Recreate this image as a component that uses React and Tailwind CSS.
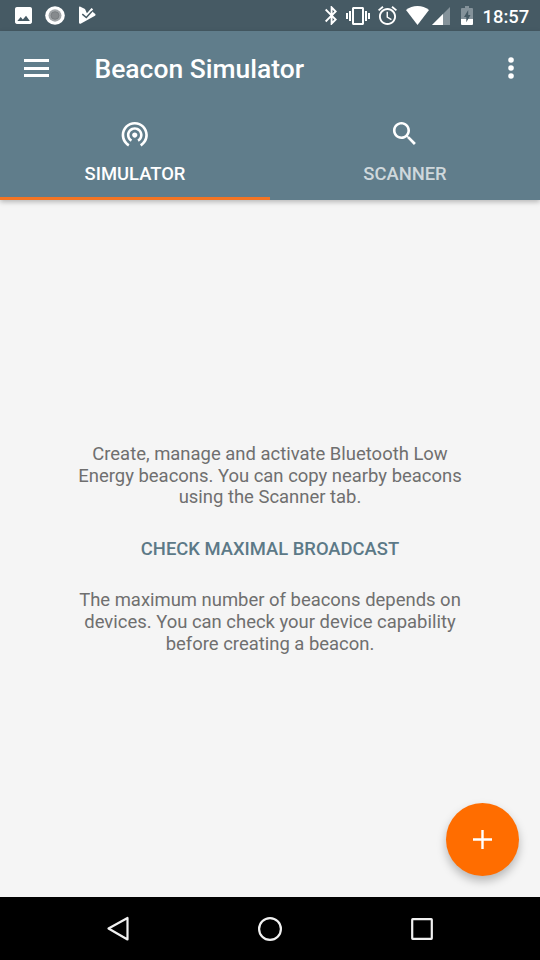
function Svg({ box, className, children }) {
  return (
    <svg viewBox={box} preserveAspectRatio="none" fill="currentColor" className={`block shrink-0 ${className}`}>
      {children}
    </svg>
  );
}

function StatusBar() {
  return (
    <div className="flex h-[31px] shrink-0 items-start bg-[#465a64] pl-[15px] text-white">
      <Svg box="3 3 18 18" className="mt-[7px] h-[17px] w-[17px]">
        <path d="M21 19V5c0-1.100-.9-2-2-2H5c-1.100 0-2 .9-2 2v14c0 1.100.9 2 2 2h14c1.100 0 2-.9 2-2zM9 13.500l2.300 2.700L14.700 12.200l4 5.500H5.500z" />
      </Svg>
      <Svg box="0 0 20 20" className="mt-[6px] ml-[13px] h-[19px] w-[20px]">
        <circle cx="10" cy="10" r="9.800" />
        <circle cx="10" cy="10" r="6.500" fill="#a1a5a8" />
        <circle cx="10" cy="10" r="4" fill="#868a8d" stroke="#74797c" strokeWidth="0.800" />
      </Svg>
      <Svg box="0 0 17 18" className="mt-[6px] ml-[14px] h-[18px] w-[17px]">
        <path d="M0 1.500Q0 0 1.500.7L6 3l2 4.500L12 4.500 16.300 8Q17 9 16 9.700L1.600 17.700Q0 18 0 16.500z" />
        <path d="M4.500 6.500l3 3L13.300 2.600" fill="none" stroke="#fff" strokeWidth="2.200" />
        <path d="M3.300 8.200l4 3.300L13 5.200" fill="none" stroke="#465a64" strokeWidth="1.500" />
      </Svg>
      <Svg box="5 2 12.710 20" className="mt-[6px] ml-[229px] h-[19px] w-[12px]">
        <path d="M17.710 7.710L12 2h-1v7.590L6.410 5 5 6.410 10.590 12 5 17.590 6.410 19 11 14.410V22h1l5.710-5.710-4.300-4.290 4.300-4.290zM13 5.830l1.880 1.880L13 9.590V5.830zm1.880 10.460L13 18.170v-3.760l1.880 1.880z" />
      </Svg>
      <Svg box="0 3 24 18" className="mt-[7px] ml-[9px] h-[18px] w-[24px]">
        <path d="M0 15h2V9H0v6zm3 2h2V7H3v10zm19-8v6h2V9h-2zm-3 8h2V7h-2v10zM16.500 3h-9C6.670 3 6 3.670 6 4.500v15c0 .83.67 1.500 1.500 1.500h9c.83 0 1.500-.67 1.500-1.500v-15c0-.83-.67-1.500-1.500-1.500zM16 19H8V5h8v14z" />
      </Svg>
      <Svg box="2 1.860 20 20.140" className="mt-[6px] ml-[8px] h-[19px] w-[19px]">
        <path d="M22 5.720l-4.600-3.860-1.290 1.530 4.600 3.860L22 5.720zM7.880 3.390L6.600 1.860 2 5.710l1.290 1.530 4.590-3.850zM12.500 8H11v6l4.750 2.850.75-1.230-4-2.370V8zM12 4c-4.970 0-9 4.030-9 9s4.020 9 9 9c4.970 0 9-4.030 9-9s-4.030-9-9-9zm0 16c-3.870 0-7-3.130-7-7s3.130-7 7-7 7 3.130 7 7-3.130 7-7 7z" />
      </Svg>
      <Svg box="0 0 23 19" className="mt-[6px] ml-[9px] h-[19px] w-[23px]">
        <path d="M11.500 19L0 4Q5 0 11.500 0T23 4z" />
      </Svg>
      <Svg box="0 0 18 18" className="mt-[7px] ml-[3px] h-[18px] w-[18px]">
        <path d="M18 0V18H0z" fill="#84929a" />
        <path d="M11 7V18H0z" />
      </Svg>
      <Svg box="0 0 12 19" className="mt-[6px] ml-[11px] h-[19px] w-[12px]">
        <path d="M4 0h4v2h3q1 0 1 1v10H0V3q0-1 1-1h3z" fill="#84929a" />
        <path d="M0 13h12v5q0 1-1 1H1q-1 0-1-1z" />
        <path d="M7.200 4L3 11h2.300v5.200L9.500 9H7.200z" fill="#465a64" />
      </Svg>
      <span className="mt-[5px] ml-[9.500px] text-[18.400px] leading-[24px] font-medium">18:57</span>
    </div>
  );
}

function Toolbar() {
  return (
    <div className="flex h-[74px] items-center pl-6">
      <div className="flex w-[25px] flex-col gap-[4.300px]">
        <div className="h-[3px] bg-white" />
        <div className="h-[3px] bg-white" />
        <div className="h-[3px] bg-white" />
      </div>
      <h1 className="ml-[45.500px] flex-1 pt-[2px] text-[26.450px] leading-8 font-medium">Beacon Simulator</h1>
      <Svg box="0 0 6 22" className="mr-[26px] h-[22px] w-[6px]">
        <circle cx="3" cy="3" r="2.800" />
        <circle cx="3" cy="11" r="2.800" />
        <circle cx="3" cy="19" r="2.800" />
      </Svg>
    </div>
  );
}

function Tabs() {
  return (
    <div className="flex h-[94.500px] text-center text-[18.400px] leading-6 font-medium">
      <div className="flex w-1/2 flex-col items-center border-b-3 border-[#f47422] pt-[13.250px]">
        <Svg box="0 0 24 24" className="size-[31.500px]">
          <path d="M12 11c-1.100 0-2 .9-2 2s.9 2 2 2 2-.9 2-2-.9-2-2-2zm6 2c0-3.310-2.690-6-6-6s-6 2.690-6 6c0 2.220 1.210 4.150 3 5.190l1-1.740c-1.190-.7-2-1.970-2-3.450 0-2.210 1.790-4 4-4s4 1.790 4 4c0 1.480-.81 2.750-2 3.450l1 1.740c1.790-1.040 3-2.970 3-5.190zM12 3C6.480 3 2 7.480 2 13c0 3.700 2.010 6.920 4.990 8.650l1-1.730C5.610 18.530 4 15.960 4 13c0-4.420 3.580-8 8-8s8 3.580 8 8c0 2.960-1.610 5.530-4 6.920l1 1.730c2.990-1.730 5-4.950 5-8.650 0-5.520-4.480-10-10-10z" />
        </Svg>
        <span className="mt-[12.250px]">SIMULATOR</span>
      </div>
      <div className="flex w-1/2 flex-col items-center pt-[13.250px]">
        <Svg box="0 0 24 24" className="size-[31.500px]">
          <path d="M15.500 14h-.79l-.28-.27C15.410 12.590 16 11.110 16 9.500 16 5.910 13.090 3 9.500 3S3 5.910 3 9.500 5.910 16 9.500 16c1.610 0 3.090-.59 4.230-1.570l.27.28v.79l5 4.990L20.490 19l-4.990-5zm-6 0C7.010 14 5 11.990 5 9.500S7.010 5 9.500 5 14 7.010 14 9.500 11.990 14 9.500 14z" />
        </Svg>
        <span className="mt-[12.250px] text-[#cfd8dc]">SCANNER</span>
      </div>
    </div>
  );
}

function NavBar() {
  return (
    <div className="grid h-[63px] shrink-0 grid-cols-3 items-center justify-items-center bg-black px-[42px] text-[#f1f1f1]">
      <Svg box="0 0 24 28" className="h-[28px] w-[24px]">
        <path d="M2.500 13.500L21.500 3V24.500z" fill="none" stroke="currentColor" strokeWidth="2.200" strokeLinejoin="round" />
      </Svg>
      <Svg box="0 0 24 24" className="size-6">
        <circle cx="12" cy="12" r="10.900" fill="none" stroke="currentColor" strokeWidth="2.200" />
      </Svg>
      <Svg box="0 0 22 22" className="size-[22px]">
        <rect x="1.200" y="1.200" width="19.600" height="19.600" rx="0.500" fill="none" stroke="currentColor" strokeWidth="2.200" />
      </Svg>
    </div>
  );
}

export default function App() {
  return (
    <div className="flex h-[960px] w-[540px] flex-col overflow-hidden bg-[#f5f5f5] font-['Roboto',sans-serif]">
      <StatusBar />
      <header className="z-10 h-[168.500px] shrink-0 bg-[#607d8b] text-white shadow-[0_2px_5px_rgba(0,0,0,0.26)]">
        <Toolbar />
        <Tabs />
      </header>
      <main className="relative flex flex-1 flex-col items-center pt-[244.500px] text-center text-[18.450px] leading-[21.600px] text-[#6f6f6f]">
        <p>
          Create, manage and activate Bluetooth Low
          <br />
          Energy beacons. You can copy nearby beacons
          <br />
          using the Scanner tab.
        </p>
        <button className="mt-[29.500px] text-[18.400px] font-medium text-[#5c7987]">CHECK MAXIMAL BROADCAST</button>
        <p className="mt-[30.500px]">
          The maximum number of beacons depends on
          <br />
          devices. You can check your device capability
          <br />
          before creating a beacon.
        </p>
        <button className="absolute right-[21px] bottom-[21px] flex size-[73.500px] items-center justify-center rounded-full bg-[#ff6d00] text-white shadow-[0_5px_10px_rgba(0,0,0,0.26)]">
          <Svg box="0 0 19 19" className="size-[19px]">
            <path d="M8.300 0h2.400v8.300H19v2.400h-8.300V19H8.300v-8.300H0V8.300h8.300z" />
          </Svg>
        </button>
      </main>
      <NavBar />
    </div>
  );
}
